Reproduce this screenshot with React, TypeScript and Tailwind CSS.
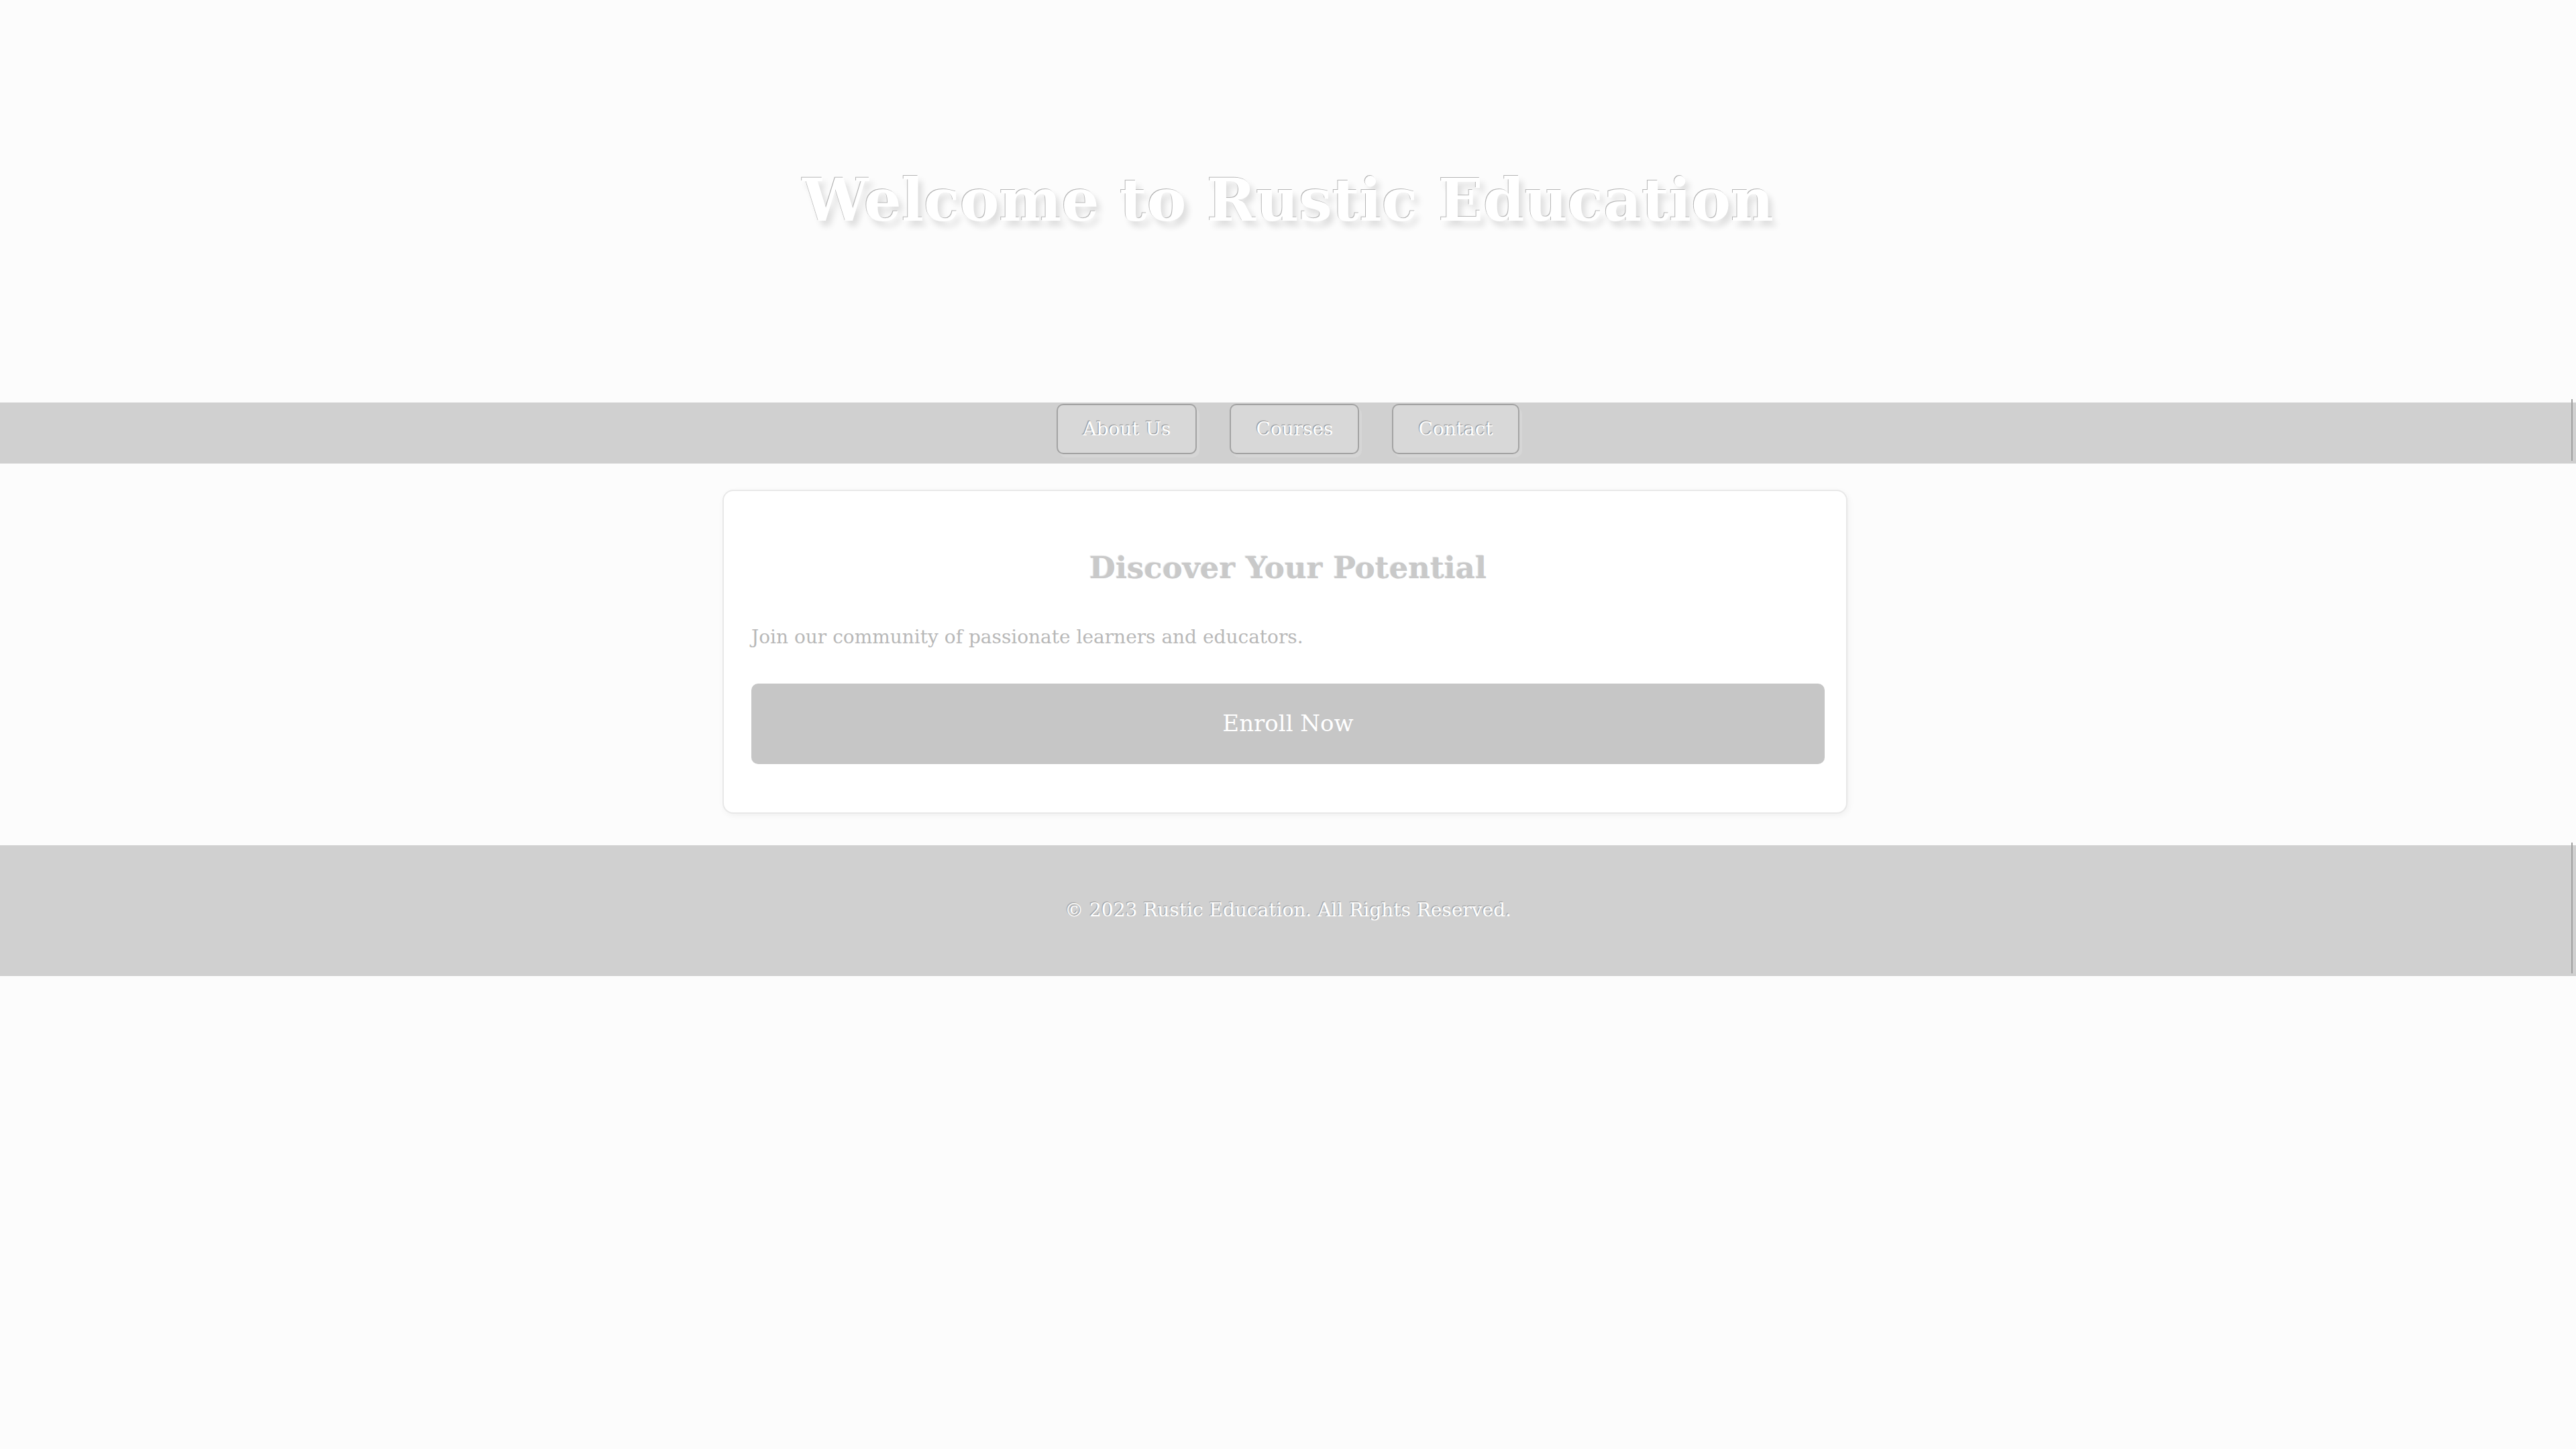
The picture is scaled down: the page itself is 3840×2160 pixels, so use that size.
const serif = "font-['DejaVu_Serif','Liberation_Serif',serif]";

const navLinks = ["About Us", "Courses", "Contact"];

function NavButton({ label }: { label: string }) {
  return (
    <a
      href="#"
      className="flex h-[75px] items-center rounded-[10px] border-2 border-[#a3a3a3] bg-[#d8d8d8] px-[37px] text-[28px] text-white shadow-[4px_5px_0_#d6d6d6] [text-shadow:-1px_-1px_1px_#8a8a8a]"
    >
      {label}
    </a>
  );
}

export default function App() {
  return (
    <div className={`min-h-screen bg-[#fcfcfc] ${serif}`}>
      <header className="flex h-[600px] items-center justify-center pb-[4px]">
        <h1 className="text-[88px] font-bold text-white [text-shadow:-1px_-1px_0_#b5b5b5,6px_8px_10px_rgba(0,0,0,0.12)]">
          Welcome to Rustic Education
        </h1>
      </header>

      <nav className="relative flex h-[91px] justify-center gap-[49px] bg-[#d0d0d0] pt-[2px]">
        {navLinks.map((label) => (
          <NavButton key={label} label={label} />
        ))}
        <span className="absolute -top-[5px] bottom-[4px] right-[5px] w-[2px] bg-[#a0a0a0]" />
      </nav>

      <main className="flex justify-center pt-[39px] pb-[47px] pr-[9px]">
        <section className="w-[1677px] rounded-[16px] border-2 border-[#e8e8e8] bg-white pt-[81px] pb-[72px] pl-[41px] pr-[32px] shadow-[2px_3px_10px_rgba(0,0,0,0.05)]">
          <h2 className="text-center text-[45px] font-bold text-[#c9c9c9] [text-shadow:-1px_-1px_1px_#e2e2e2]">
            Discover Your Potential
          </h2>
          <p className="mt-[48px] text-[28px] text-[#b8b8b8]">
            Join our community of passionate learners and educators.
          </p>
          <button
            type="button"
            className="mt-[48px] flex h-[120px] w-full items-center justify-center rounded-[10px] bg-[#c6c6c6] text-[34px] text-white"
          >
            Enroll Now
          </button>
        </section>
      </main>

      <footer className="relative flex h-[195px] items-center justify-center bg-[#d0d0d0]">
        <p className="text-[28px] text-white [text-shadow:-1px_-1px_1px_#9a9a9a]">
          © 2023 Rustic Education. All Rights Reserved.
        </p>
        <span className="absolute -top-[4px] bottom-[4px] right-[5px] w-[2px] bg-[#a0a0a0]" />
      </footer>
    </div>
  );
}
